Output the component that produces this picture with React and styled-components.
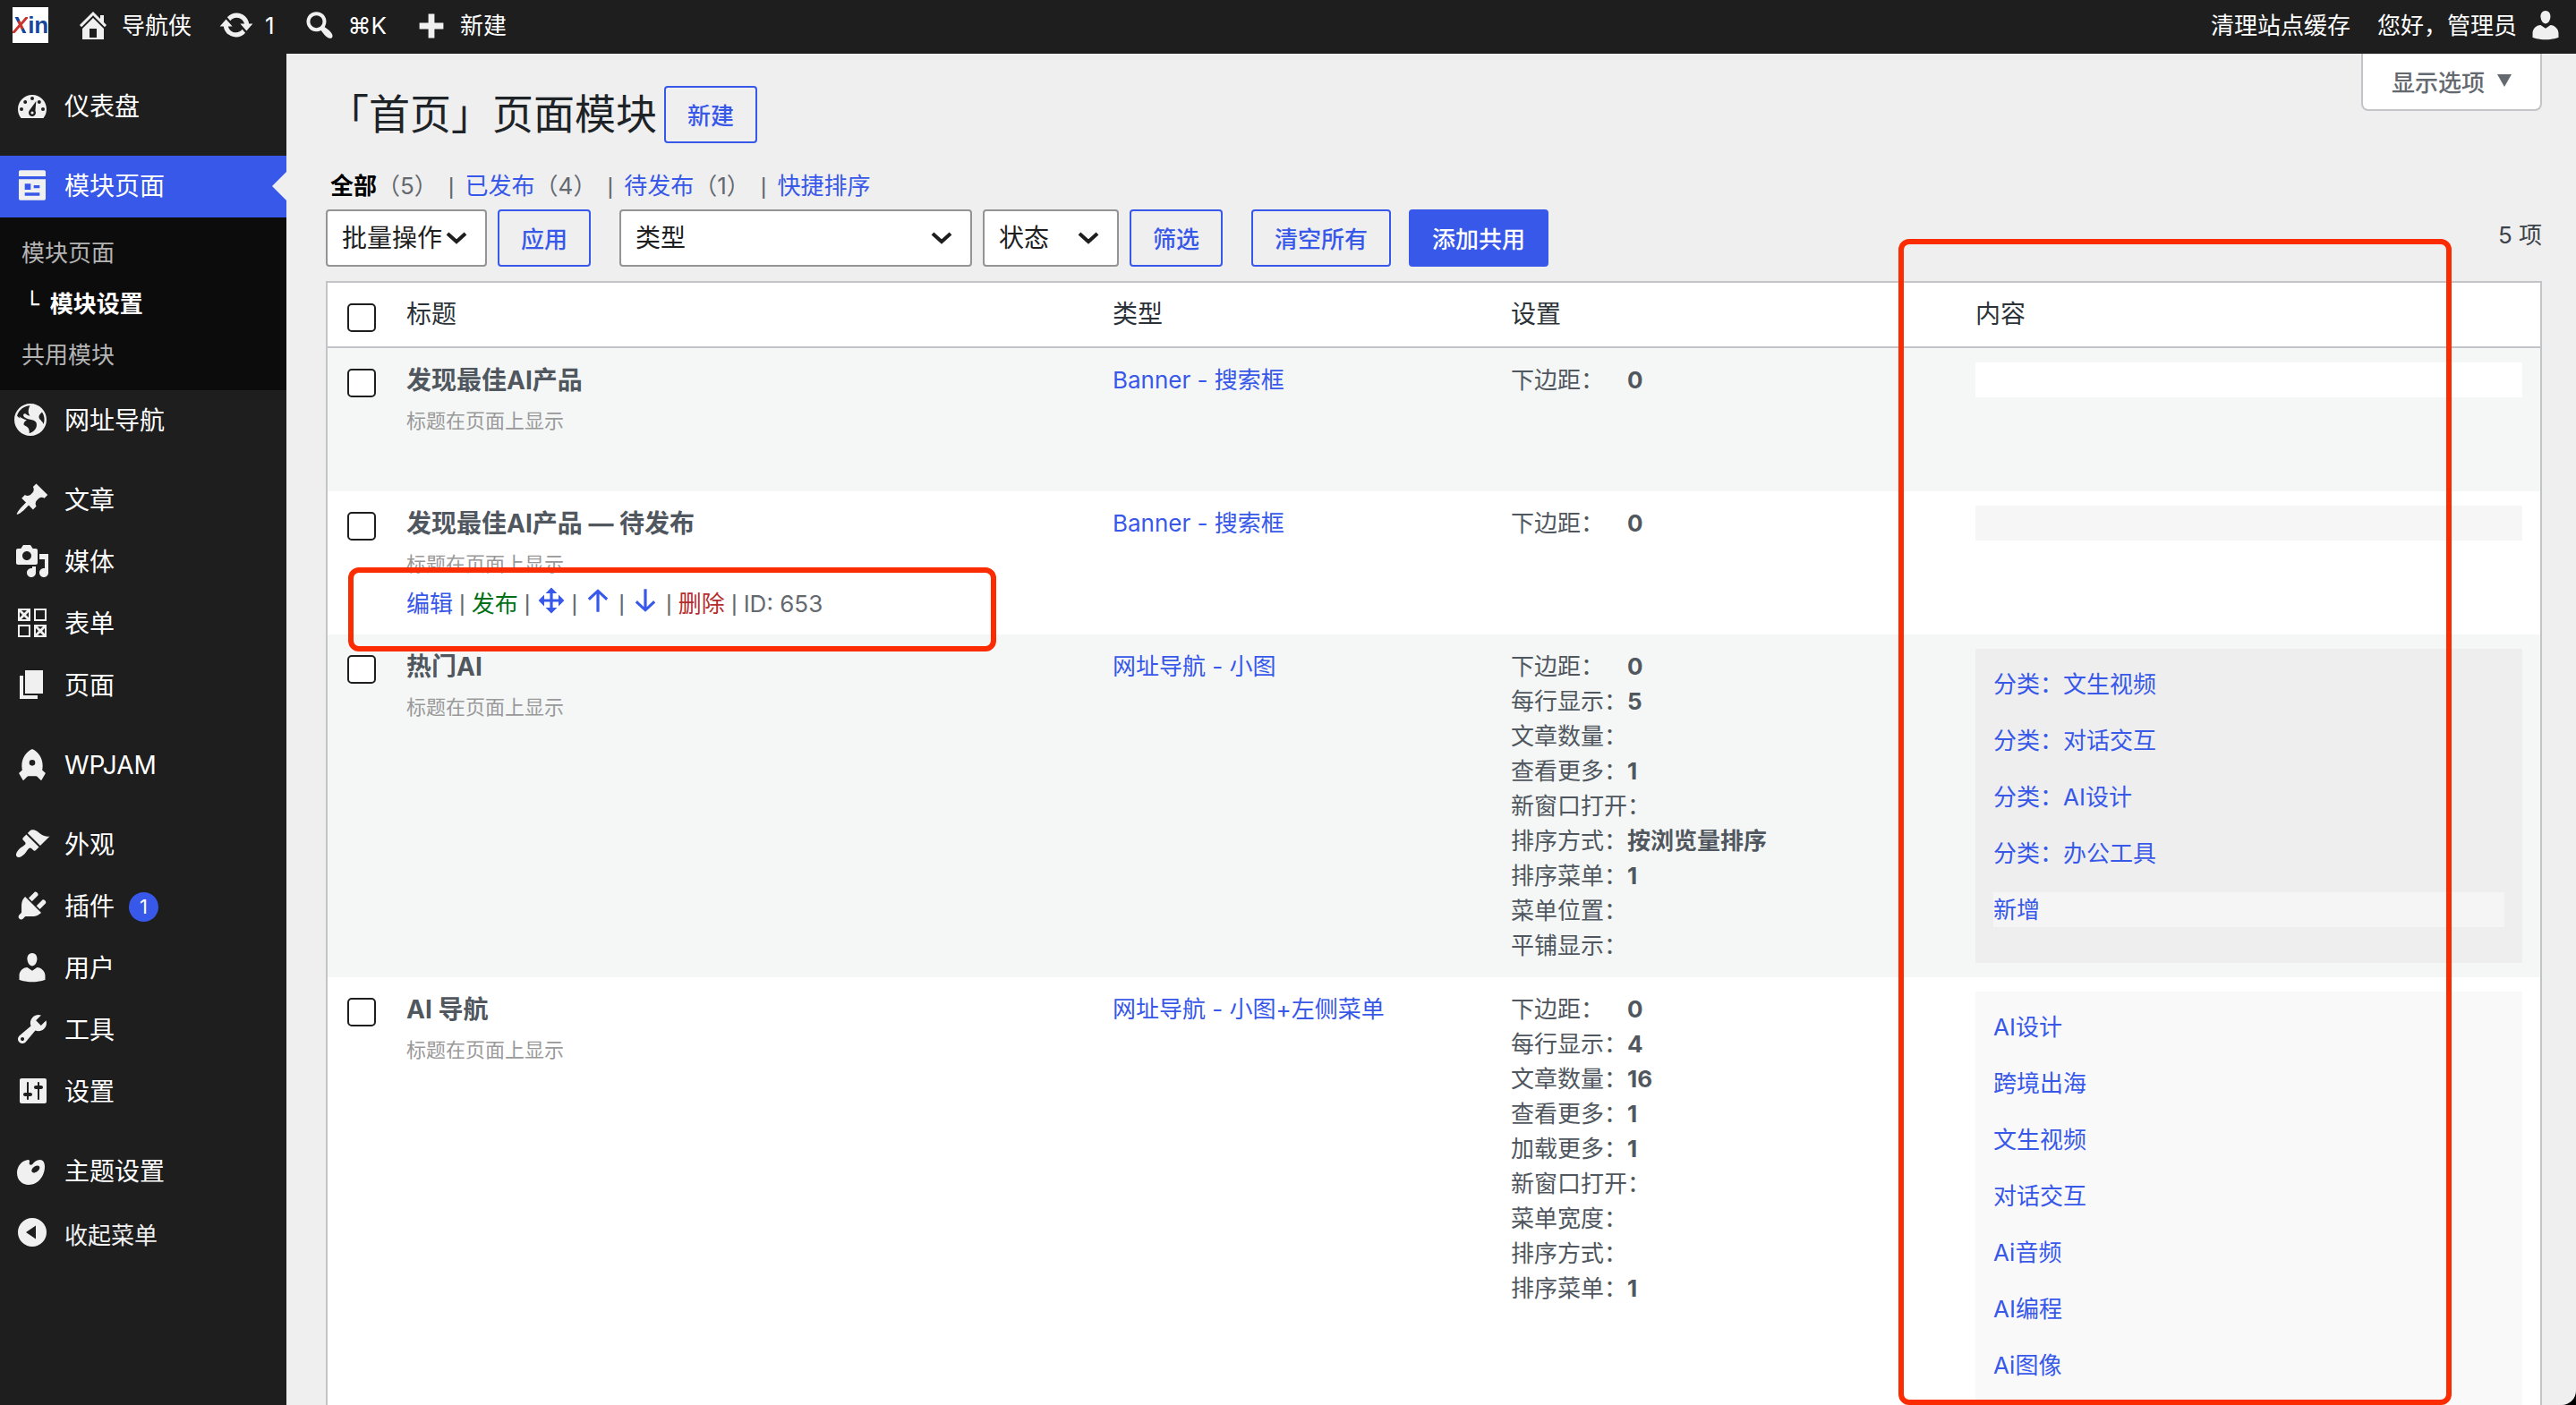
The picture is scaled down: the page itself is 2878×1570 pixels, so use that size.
import React from "react"
import styled, { createGlobalStyle, css } from "styled-components"

const blue = "#3858e9"

const GlobalStyle = createGlobalStyle`
  * {
    box-sizing: border-box;
  }

  body {
    margin: 0;
    background: black;
    color: #3c434a;
    font-family: Inter, "Noto Sans CJK SC", sans-serif;
    font-size: 26px;
    line-height: 39px;
  }

  a {
    color: ${blue};
    text-decoration: none;
  }

  ul {
    list-style: none;
    margin: 0;
    padding: 0;
  }

  button, select, input {
    font-family: inherit;
    margin: 0;
  }
`

const Shell = styled.div`
  display: flex;
  flex-direction: column;
  height: 100vh;
  overflow: hidden;
  background: #efefef;
  border-bottom-right-radius: 16px;
`

const AdminBar = styled.header`
  display: flex;
  flex: none;
  align-items: center;
  gap: 30px;
  height: 60px;
  padding: 0 14px 4px;
  background: #1e1e1e;
`

const BarLink = styled.a`
  display: flex;
  align-items: center;
  gap: 12px;
  color: #fff;
`

const Spacer = styled.div`
  flex: 1;
`

const Logo = styled.a`
  display: flex;
  align-items: center;
  justify-content: center;
  width: 40px;
  height: 40px;
  background: #fff;
  color: #17479e;
  font-family: "Liberation Sans", sans-serif;
  font-weight: bold;
  font-size: 26px;

  em {
    background: linear-gradient(135deg, #17479e 38%, #c8352c 38%, #c8352c 62%, #17479e 62%);
    background-clip: text;
    color: transparent;
  }
`

const Body = styled.div`
  display: flex;
  flex: 1;
  min-height: 0;
`

const Sidebar = styled.nav`
  flex: none;
  width: 320px;
  padding-top: 25px;
  background: #1e1e1e;
`

const MenuGroup = styled.ul`
  margin-bottom: 20px;
`

const MenuLink = styled.a`
  position: relative;
  display: flex;
  align-items: center;
  gap: 16px;
  height: 69px;
  padding-left: 16px;
  color: #fff;
  font-size: 28px;

  svg {
    margin-bottom: 4px;
  }

  ${({ $active }) => $active && css`
    background: ${blue};

    &::after {
      content: "";
      position: absolute;
      right: 0;
      top: 18px;
      border: 16px solid transparent;
      border-left: none;
      border-right-color: #efefef;
    }
  `}
`

const CollapseButton = styled.button`
  display: flex;
  align-items: center;
  gap: 16px;
  width: 100%;
  height: 69px;
  padding: 0 0 0 16px;
  border: none;
  background: none;
  color: #f0f0f1;
  font-size: 26px;

  svg {
    margin-bottom: 4px;
  }
`

const Badge = styled.span`
  width: 33px;
  height: 33px;
  border-radius: 50%;
  background: ${blue};
  font-size: 22px;
  line-height: 33px;
  text-align: center;
`

const SubMenu = styled.ul`
  padding: 11px 0;
  background: #0c0c0c;
`

const SubLink = styled.a`
  display: block;
  padding-left: ${({ $current }) => ($current ? "28px" : "24px")};
  line-height: 57px;
  color: ${({ $current }) => ($current ? "#fff" : "#b4b4b4")};
  font-weight: ${({ $current }) => ($current ? "bold" : "normal")};
`

const Corner = styled.span`
  margin-right: 12px;
  font-family: "DejaVu Sans", sans-serif;
  font-weight: normal;
  line-height: 1;
`

const Main = styled.main`
  position: relative;
  flex: 1;
  min-width: 0;
  padding: 0 38px 0 44px;
  overflow: hidden;
`

const PageHead = styled.div`
  display: flex;
  align-items: flex-start;
  justify-content: space-between;
`

const Heading = styled.div`
  display: flex;
  align-items: center;
  gap: 8px;
  padding: 36px 0 0 2px;
`

const Title = styled.h1`
  margin: 0;
  padding-bottom: 2px;
  color: #1d2327;
  font-size: 46px;
  font-weight: normal;
  line-height: 62px;
`

const Button = styled.button`
  height: 64px;
  padding: 0 24px 2px;
  border: 2px solid ${blue};
  border-radius: 4px;
  background: ${({ $primary }) => ($primary ? blue : "transparent")};
  color: ${({ $primary }) => ($primary ? "#fff" : blue)};
  font-size: 26px;
  font-weight: 500;
`

const ScreenOptions = styled.button`
  display: flex;
  align-items: center;
  gap: 14px;
  height: 64px;
  padding: 0 32px 2px;
  border: 2px solid #c3c4c7;
  border-top: none;
  border-radius: 0 0 8px 8px;
  background: #fff;
  color: #646970;
  font-size: 26px;
  font-weight: 500;
`

const Views = styled.ul`
  display: flex;
  gap: 12px;
  margin: 28px 0 6px;
  padding-left: 5px;
  line-height: 40px;
  color: #646970;

  strong {
    color: #000;
  }
`

const Pipe = styled.span`
  font-family: "Liberation Sans", sans-serif;
`

const Toolbar = styled.div`
  display: flex;
  gap: 32px;
  margin-bottom: 16px;
`

const ToolGroup = styled.div`
  display: flex;
  gap: ${({ $wide }) => ($wide ? "20px" : "12px")};
`

const chevron = `url("data:image/svg+xml,%3Csvg xmlns='http://www.w3.org/2000/svg' viewBox='0 0 24 14'%3E%3Cpath d='M2 2l10 9L22 2' fill='none' stroke='%231e1e1e' stroke-width='4'/%3E%3C/svg%3E")`

const Select = styled.select`
  width: ${({ $width }) => $width}px;
  height: 64px;
  padding: 0 0 0 16px;
  border: 2px solid #949494;
  border-radius: 4px;
  appearance: none;
  background: #fff ${chevron} no-repeat right 20px center / 24px 14px;
  color: #1e1e1e;
  font-size: 28px;
`

const Count = styled.span`
  margin-left: auto;
  line-height: 58px;
`

const Table = styled.table`
  width: 100%;
  table-layout: fixed;
  border: 2px solid #c3c4c7;
  border-spacing: 0;
  background: #fff;
  color: #50575e;

  th {
    height: 73px;
    padding: 0 20px;
    border-bottom: 2px solid #c3c4c7;
    color: #2c3338;
    font-size: 28px;
    font-weight: normal;
    text-align: left;
  }

  td {
    padding: 16px 20px;
    vertical-align: top;
  }

  th:first-child,
  td:first-child {
    width: 68px;
    padding: 23px 0 0 22px;
    vertical-align: top;
    line-height: 1;
  }

  tbody tr:nth-child(odd) {
    background: #f5f7f7;
  }
`

const ColHead = styled.th`
  width: ${({ $width }) => $width};
`

const Checkbox = styled.input`
  display: block;
  width: 32px;
  height: 32px;
  border: 2px solid #1e1e1e;
  border-radius: 5px;
  appearance: none;
  background: #fff;
`

const RowTitle = styled.strong`
  display: block;
  font-size: 28px;
  line-height: 40px;
`

const RowNote = styled.div`
  margin-top: 10px;
  color: #999;
  font-size: 22px;
  line-height: 30px;
`

const RowActions = styled.div`
  position: relative;
  display: flex;
  align-items: center;
  gap: 7px;
  height: 38px;
  margin-top: 10px;
  color: #646970;
`

const ActionLink = styled.a`
  color: ${({ $color }) => $color || blue};

  svg {
    display: block;
    margin-bottom: 6px;
  }
`

const Setting = styled.div`
  display: flex;

  span {
    min-width: 130px;
  }
`

const ItemList = styled.ul`
  display: flex;
  flex-direction: column;
  gap: 24px;
  min-height: 39px;
  padding: ${({ $filled }) => ($filled ? "20px 20px 40px" : "0")};
  background: ${({ $color }) => $color};
`

const Item = styled.li`
  background: ${({ $add }) => ($add ? "#f5f5f5" : "none")};
`

const RedBox = styled.div`
  position: absolute;
  border: 6px solid #fb2b02;
  border-radius: 12px;
  pointer-events: none;
`

// frames the row actions
const ActionsMark = styled(RedBox)`
  left: -65px;
  top: -21px;
  width: 724px;
  height: 94px;
`

// frames the content column
const ColumnMark = styled(RedBox)`
  right: 139px;
  top: 207px;
  bottom: 0;
  width: 618px;
`

const icons = {
  home: "M16 8.5l1.53 1.53-1.06 1.06L10 4.6l-6.47 6.49-1.06-1.06L10 2.5l4 4v-2h2v4zm-6-2.46l6 5.99V18H4v-5.97zM12 17v-5H8v5h4z",
  update: "M10.2 3.28c3.53 0 6.43 2.61 6.92 6h2.08l-3.5 4-3.5-4h2.32c-.45-1.97-2.21-3.45-4.32-3.45-1.45 0-2.73.71-3.54 1.78L4.95 5.66C6.23 4.2 8.11 3.28 10.2 3.28zm-.4 13.44c-3.52 0-6.43-2.61-6.92-6H.8l3.5-4c1.17 1.33 2.33 2.67 3.5 4H5.48c.45 1.97 2.21 3.45 4.32 3.45 1.45 0 2.73-.71 3.54-1.78l1.71 1.95c-1.28 1.46-3.15 2.38-5.25 2.38z",
  search: "M12.14 4.18c1.87 1.87 2.11 4.75.72 6.89.12.1.22.21.36.31.2.16.47.36.81.59.34.24.56.39.66.47.42.31.73.57.94.78.32.32.6.65.84 1 .25.35.44.69.59 1.04.14.35.21.68.18 1-.02.32-.14.59-.36.81s-.49.34-.81.36c-.31.02-.65-.04-.99-.19-.35-.14-.7-.34-1.04-.59-.35-.24-.68-.52-1-.84-.21-.21-.47-.52-.77-.93-.1-.13-.25-.35-.47-.66-.22-.32-.4-.57-.56-.78-.16-.2-.29-.35-.44-.5-2.07 1.09-4.69.76-6.44-.98-2.14-2.15-2.14-5.64 0-7.78 2.15-2.15 5.63-2.15 7.78 0zm-1.41 6.36c1.36-1.37 1.36-3.58 0-4.95-1.37-1.37-3.59-1.37-4.95 0-1.37 1.37-1.37 3.58 0 4.95 1.36 1.37 3.58 1.37 4.95 0z",
  plus: "M8.3 3.8h3.4v5h5v3.4h-5v5H8.3v-5h-5V8.8h5z",
  user: "M10 9.25c-2.27 0-2.73-3.44-2.73-3.44C7 4.02 7.82 2 9.97 2c2.16 0 2.98 2.02 2.71 3.81 0 0-.41 3.44-2.68 3.44zm0 2.57L12.72 10c2.39 0 4.52 2.33 4.52 4.53v2.49s-3.65 1.13-7.24 1.13c-3.65 0-7.24-1.13-7.24-1.13v-2.49c0-2.25 1.94-4.48 4.47-4.48z",
  dashboard: "M3.76 17h12.48c1.1-1.37 1.76-3.11 1.76-5 0-4.42-3.58-8-8-8s-8 3.58-8 8c0 1.89.66 3.63 1.76 5zM10 5a1 1 0 1 1 0 2 1 1 0 0 1 0-2zM6.1 7a1 1 0 1 1 0 2 1 1 0 0 1 0-2zM13.9 7a1 1 0 1 1 0 2 1 1 0 0 1 0-2zM4 11a1 1 0 1 1 0 2 1 1 0 0 1 0-2zM16 11a1 1 0 1 1 0 2 1 1 0 0 1 0-2zM12.2 7.5l-.5 5.5c.2.3.3.7.3 1a2 2 0 1 1-3.6-1.2zM10 13.2a.8.8 0 1 0 0 1.6.8.8 0 0 0 0-1.6z",
  globe: "M9 0C4.03 0 0 4.03 0 9s4.03 9 9 9 9-4.03 9-9-4.03-9-9-9zm3.46 11.95c0 1.47-.8 3.3-4.06 4.7.3-4.17-2.52-3.69-3.2-5 .126-1.1.804-2.063 1.8-2.55-1.552-.266-3-.96-4.18-2 .05.47.28.904.64 1.21-.782-.295-1.458-.817-1.94-1.5.977-3.225 3.883-5.482 7.25-5.63-.84 1.38-1.5 4.13 0 5.57C7.23 7 6.26 5 5.41 5.79c-1.13 1.06.33 2.51 3.42 3.08 3.29.59 3.66 1.58 3.63 3.08zm1.34-4c-.32-1.11.62-2.23 1.69-3.14 1.356 1.955 1.67 4.45.84 6.68-.77-1.89-2.17-2.32-2.53-3.57v.03z",
  pin: "M10.44 3.02l1.82-1.82 6.36 6.35-1.83 1.82c-1.05-.68-2.48-.57-3.41.36l-.75.75c-.92.93-1.04 2.35-.35 3.41l-1.83 1.82-2.41-2.41-2.8 2.79c-.42.42-3.38 2.71-3.8 2.29s1.86-3.39 2.28-3.81l2.79-2.79L4.1 9.36l1.83-1.82c1.05.69 2.48.57 3.4-.36l.75-.75c.93-.92 1.05-2.35.36-3.41z",
  media: "M13 11V4c0-.55-.45-1-1-1h-1.67L9 1H5L3.67 3H2c-.55 0-1 .45-1 1v7c0 .55.45 1 1 1h10c.55 0 1-.45 1-1zM7 4.5c1.38 0 2.5 1.12 2.5 2.5S8.38 9.5 7 9.5 4.5 8.38 4.5 7 5.62 4.5 7 4.5zM14 6h5v10.5c0 1.38-1.12 2.5-2.5 2.5S14 17.88 14 16.5s1.12-2.5 2.5-2.5c.17 0 .34.02.5.05V9h-3V6zm-4 8.05V13h2v3.5c0 1.38-1.12 2.5-2.5 2.5S7 17.88 7 16.5 8.12 14 9.5 14c.17 0 .34.02.5.05z",
  forms: "M2 2h7v7H2zM3 4v3l1.5-1.5zM4 3l1.5 1.5L7 3zM8 4L6.500 5.500 8 7zM4 8h3L5.5 6.5zM11 2h7v7h-7zM12 3v5h5V3zM2 11h7v7H2zM3 12v5h5v-5zM11 11h7v7h-7zM12 13v3l1.5-1.5zM13 12l1.5 1.5L16 12zM17 13l-1.5 1.5L17 16zM13 17h3l-1.5-1.5z",
  page: "M6 15V2h10v13H6zm-1 1h8v2H3V5h2v11z",
  brush: "M14.48 11.06L7.41 3.99l1.5-1.5c.5-.56 2.3-.47 3.51.32 1.21.8 1.43 1.28 2.91 2.1 1.18.64 2.45 1.26 4.45.85zm-.71.71L6.7 4.7 4.93 6.47c-.39.39-.39 1.02 0 1.41l1.06 1.06c.39.39.39 1.03 0 1.42-.6.6-1.43 1.11-2.21 1.69-.35.26-.7.53-1.01.84C1.43 14.23.4 16.08 1.4 17.07c.99 1 2.84-.03 4.18-1.36.31-.31.58-.66.85-1.02.57-.78 1.08-1.61 1.69-2.21.39-.39 1.02-.39 1.41 0l1.06 1.06c.39.39 1.02.39 1.41 0z",
  plugin: "M13.11 4.36L9.87 7.6 8 5.73l3.24-3.24c.35-.34 1.05-.2 1.56.32.52.51.66 1.21.31 1.55zm-8 1.77l.91-1.12 9.01 9.01-1.19.84c-.71.71-2.63 1.16-3.82 1.16H6.14L4.9 17.26c-.59.59-1.54.59-2.12 0-.59-.58-.59-1.53 0-2.12l1.24-1.24v-3.88c0-1.13.4-3.19 1.09-3.89zm7.26 3.97l3.24-3.24c.34-.35 1.04-.21 1.55.31.52.51.66 1.21.31 1.55l-3.24 3.25z",
  tools: "M16.68 9.77c-1.34 1.34-3.3 1.67-4.95.99l-5.41 6.52c-.99.99-2.59.99-3.58 0s-.99-2.59 0-3.57l6.52-5.42c-.68-1.65-.35-3.61.99-4.95 1.28-1.28 3.12-1.62 4.72-1.06l-2.89 2.89 2.82 2.82 2.86-2.87c.53 1.58.18 3.39-1.08 4.65zM3.81 16.21c.4.39 1.04.39 1.43 0 .4-.4.4-1.04 0-1.43-.39-.4-1.03-.4-1.43 0-.39.39-.39 1.03 0 1.43z",
  settings: "M18 16V4c0-.55-.45-1-1-1H4c-.55 0-1 .45-1 1v12c0 .55.45 1 1 1h13c.55 0 1-.45 1-1zM8 11h1c.55 0 1 .45 1 1s-.45 1-1 1H8v1.5c0 .28-.22.5-.5.5s-.5-.22-.5-.5V13H6c-.55 0-1-.45-1-1s.45-1 1-1h1V5.5c0-.28.22-.5.5-.5s.5.22.5.5V11zm5-2h-1c-.55 0-1-.45-1-1s.45-1 1-1h1V5.5c0-.28.22-.5.5-.5s.5.22.5.5V7h1c.55 0 1 .45 1 1s-.45 1-1 1h-1v5.5c0 .28-.22.5-.5.5s-.5-.22-.5-.5V9z",
  palette: "M7.6 4C3.8 4.5 1.5 8 1.5 11.3 1.5 15.5 4.5 18 8 18c5.5 0 9-5 9-10.2C17 5.5 16 4 14.3 4c-2 0-3.1 1.1-4.1 2.4-.9 1-2.2.3-1.8-.9.3-.9.1-1.5-.8-1.5zM10 10.9c-.8-.9 0-2.2 1.1-3 1.2-.8 2.4-.9 2.9-.2.5.8-.1 2-1.2 2.8-1.1.8-2.3 1-2.8.4z",
  collapse: "M10 2a8 8 0 1 0 0 16 8 8 0 0 0 0-16zM12 6.3v7.4L6.5 10z",
  move: "M19 10l-4 4v-3h-4v4h3l-4 4-4-4h3v-4H5v3l-4-4 4-4v3h4V5H6l4-4 4 4h-3v4h4V6z",
  up: "M9 18V5.5L4.300 10 3 8.500 10 2l7 6.500-1.300 1.500L11 5.500V18z",
  down: "M9 2v12.500L4.300 10 3 11.500 10 18l7-6.500-1.300-1.500-4.700 4.500V2z",
  // these two sit on a 24 unit grid
  pages: "M20 22H4a1 1 0 0 1-1-1V8h18v13a1 1 0 0 1-1 1zm1-16H3V3a1 1 0 0 1 1-1h16a1 1 0 0 1 1 1v3zM7 11v4h4v-4H7zm0 6v2h10v-2H7zm6-5v2h4v-2h-4z",
  rocket: "M5.33 15.929A13.064 13.064 0 0 1 5 13c0-5.088 2.903-9.436 7-11.182C16.097 3.564 19 7.912 19 13c0 1.01-.114 1.991-.33 2.929l2.02 1.796a.5.5 0 0 1 .097.63l-2.458 4.096a.5.5 0 0 1-.782.096l-2.254-2.254a1 1 0 0 0-.707-.293H9.414a1 1 0 0 0-.707.293l-2.254 2.254a.5.5 0 0 1-.782-.096l-2.458-4.095a.5.5 0 0 1 .097-.631l2.02-1.796zM12 13a2 2 0 1 0 0-4 2 2 0 0 0 0 4z",
}

const viewBoxes = {
  globe: "0 -1 20 20",
  pages: "0 0 24 24",
  rocket: "0 0 24 24",
}

function Icon({ name, size = 40, color = "#f0f0f1" }) {
  return (
    <svg width={size} height={size} viewBox={viewBoxes[name] || "0 0 20 20"} fill={color} fillRule="evenodd" aria-hidden="true">
      <path d={icons[name]} />
    </svg>
  )
}

const menu = [
  [{ icon: "dashboard", label: "仪表盘" }],
  [
    { icon: "pages", label: "模块页面", active: true, sub: ["模块页面", "模块设置", "共用模块"] },
    { icon: "globe", label: "网址导航" },
  ],
  [
    { icon: "pin", label: "文章" },
    { icon: "media", label: "媒体" },
    { icon: "forms", label: "表单" },
    { icon: "page", label: "页面" },
  ],
  [{ icon: "rocket", label: "WPJAM" }],
  [
    { icon: "brush", label: "外观" },
    { icon: "plugin", label: "插件", badge: 1 },
    { icon: "user", label: "用户" },
    { icon: "tools", label: "工具" },
    { icon: "settings", label: "设置" },
  ],
]

const rows = [
  {
    title: "发现最佳AI产品",
    type: "Banner - 搜索框",
    settings: [["下边距", "0"]],
    items: [],
    color: "#fff",
  },
  {
    title: "发现最佳AI产品 — 待发布",
    type: "Banner - 搜索框",
    settings: [["下边距", "0"]],
    items: [],
    color: "#f6f6f6",
    id: 653,
  },
  {
    title: "热门AI",
    type: "网址导航 - 小图",
    settings: [
      ["下边距", "0"],
      ["每行显示", "5"],
      ["文章数量", ""],
      ["查看更多", "1"],
      ["新窗口打开", ""],
      ["排序方式", "按浏览量排序"],
      ["排序菜单", "1"],
      ["菜单位置", ""],
      ["平铺显示", ""],
    ],
    items: ["分类：文生视频", "分类：对话交互", "分类：AI设计", "分类：办公工具", "新增"],
    color: "#eee",
  },
  {
    title: "AI 导航",
    type: "网址导航 - 小图+左侧菜单",
    settings: [
      ["下边距", "0"],
      ["每行显示", "4"],
      ["文章数量", "16"],
      ["查看更多", "1"],
      ["加载更多", "1"],
      ["新窗口打开", ""],
      ["菜单宽度", ""],
      ["排序方式", ""],
      ["排序菜单", "1"],
    ],
    items: ["AI设计", "跨境出海", "文生视频", "对话交互", "Ai音频", "AI编程", "Ai图像"],
    color: "#f9f9f9",
  },
]

function SideMenu() {
  return (
    <Sidebar>
      {menu.map((group, i) => (
        <MenuGroup key={i}>
          {group.map(({ icon, label, active, sub, badge }) => (
            <li key={label}>
              <MenuLink href="#" $active={active}>
                <Icon name={icon} />
                {label}
                {badge && <Badge>{badge}</Badge>}
              </MenuLink>
              {sub && (
                <SubMenu>
                  {sub.map((name) => (
                    <li key={name}>
                      <SubLink href="#" $current={name === "模块设置"}>
                        {name === "模块设置" && <Corner>└</Corner>}
                        {name}
                      </SubLink>
                    </li>
                  ))}
                </SubMenu>
              )}
            </li>
          ))}
        </MenuGroup>
      ))}
      <MenuLink href="#"><Icon name="palette" />主题设置</MenuLink>
      <CollapseButton><Icon name="collapse" />收起菜单</CollapseButton>
    </Sidebar>
  )
}

function Actions({ id }) {
  return (
    <RowActions>
      <ActionLink href="#">编辑</ActionLink>
      <Pipe>|</Pipe>
      <ActionLink href="#" $color="#007017">发布</ActionLink>
      <Pipe>|</Pipe>
      <ActionLink href="#" aria-label="移动"><Icon name="move" size={32} color={blue} /></ActionLink>
      <Pipe>|</Pipe>
      <ActionLink href="#" aria-label="上移"><Icon name="up" size={32} color={blue} /></ActionLink>
      <Pipe>|</Pipe>
      <ActionLink href="#" aria-label="下移"><Icon name="down" size={32} color={blue} /></ActionLink>
      <Pipe>|</Pipe>
      <ActionLink href="#" $color="#b32d2e">删除</ActionLink>
      <Pipe>|</Pipe>
      <span>ID: {id}</span>
      <ActionsMark />
    </RowActions>
  )
}

function ModuleRow({ row }) {
  return (
    <tr>
      <td><Checkbox type="checkbox" aria-label={row.title} /></td>
      <td>
        <RowTitle>{row.title}</RowTitle>
        <RowNote>标题在页面上显示</RowNote>
        {row.id ? <Actions id={row.id} /> : <RowActions />}
      </td>
      <td><a href="#">{row.type}</a></td>
      <td>
        {row.settings.map(([label, value]) => (
          <Setting key={label}><span>{label}：</span><b>{value}</b></Setting>
        ))}
      </td>
      <td>
        <ItemList $filled={row.items.length > 0} $color={row.color}>
          {row.items.map((item) => (
            <Item key={item} $add={item === "新增"}><a href="#">{item}</a></Item>
          ))}
        </ItemList>
      </td>
    </tr>
  )
}

export default function App() {
  return (
    <Shell>
      <GlobalStyle />
      <AdminBar>
        <Logo href="#"><em>X</em>in</Logo>
        <BarLink href="#"><Icon name="home" />导航侠</BarLink>
        <BarLink href="#"><Icon name="update" />1</BarLink>
        <BarLink href="#"><Icon name="search" />⌘K</BarLink>
        <BarLink href="#"><Icon name="plus" />新建</BarLink>
        <Spacer />
        <BarLink href="#">清理站点缓存</BarLink>
        <BarLink href="#">您好，管理员<Icon name="user" /></BarLink>
      </AdminBar>
      <Body>
        <SideMenu />
        <Main>
          <PageHead>
            <Heading>
              <Title>「首页」页面模块</Title>
              <Button>新建</Button>
            </Heading>
            <ScreenOptions>显示选项 <svg width="16" height="14" viewBox="0 0 16 14" fill="#646970"><path d="M0 0h16L8 14z" /></svg></ScreenOptions>
          </PageHead>
          <Views>
            <li><strong>全部</strong>（5）</li>
            <li><Pipe>|</Pipe></li>
            <li><a href="#">已发布</a>（4）</li>
            <li><Pipe>|</Pipe></li>
            <li><a href="#">待发布</a>（1）</li>
            <li><Pipe>|</Pipe></li>
            <li><a href="#">快捷排序</a></li>
          </Views>
          <Toolbar>
            <ToolGroup>
              <Select $width={180} aria-label="批量操作"><option>批量操作</option></Select>
              <Button>应用</Button>
            </ToolGroup>
            <ToolGroup>
              <Select $width={394} aria-label="类型"><option>类型</option></Select>
              <Select $width={152} aria-label="状态"><option>状态</option></Select>
              <Button>筛选</Button>
            </ToolGroup>
            <ToolGroup $wide>
              <Button>清空所有</Button>
              <Button $primary>添加共用</Button>
            </ToolGroup>
            <Count>5 项</Count>
          </Toolbar>
          <Table>
            <thead>
              <tr>
                <th><Checkbox type="checkbox" aria-label="全选" /></th>
                <ColHead>标题</ColHead>
                <ColHead $width="18%">类型</ColHead>
                <ColHead $width="21%">设置</ColHead>
                <ColHead $width="651px">内容</ColHead>
              </tr>
            </thead>
            <tbody>
              {rows.map((row, i) => <ModuleRow key={i} row={row} />)}
            </tbody>
          </Table>
          <ColumnMark />
        </Main>
      </Body>
    </Shell>
  )
}
